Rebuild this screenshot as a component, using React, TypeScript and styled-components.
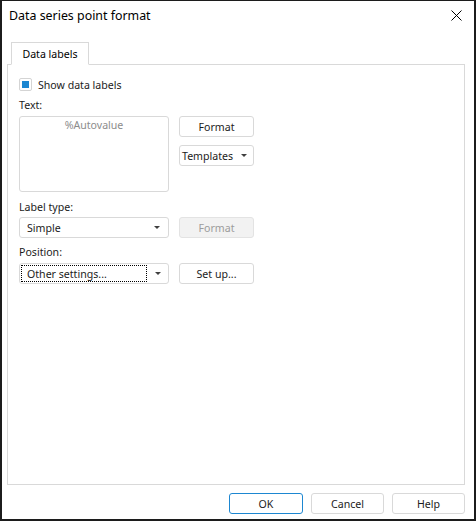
import React from "react";
import styled, { createGlobalStyle } from "styled-components";

const GlobalStyle = createGlobalStyle`
  html, body {
    margin: 0;
    padding: 0;
    background: #ffffff;
  }
  body {
    font-family: "Noto Sans", "Open Sans", "DejaVu Sans", sans-serif;
    font-size: 10.6px;
    color: #1b1b1b;
  }
  * {
    box-sizing: border-box;
  }
`;

const Dialog = styled.div`
  width: 476px;
  height: 521px;
  background: #ffffff;
  border: 2px solid #1c1c1c;
  border-top-width: 1px;
  display: flex;
  flex-direction: column;
`;

const TitleBar = styled.div`
  height: 29px;
  display: flex;
  align-items: center;
  justify-content: space-between;
  padding: 0 12px 0 7px;
`;

const Title = styled.div`
  font-size: 12.4px;
  color: #000000;
`;

const CloseButton = styled.div`
  width: 12px;
  height: 12px;
  display: flex;
  align-items: center;
  justify-content: center;
`;

const Body = styled.div`
  flex: 1;
  display: flex;
  flex-direction: column;
  padding: 12px 9px 5px 5px;
`;

const TabStrip = styled.div`
  display: flex;
  padding-left: 4px;
  margin-bottom: -1px;
  position: relative;
  z-index: 1;
`;

const Tab = styled.div`
  width: 78px;
  height: 23px;
  border: 1px solid #d9d9d9;
  border-bottom: 1px solid #ffffff;
  background: #ffffff;
  display: flex;
  align-items: center;
  justify-content: center;
  color: #000000;
`;

const Panel = styled.div`
  flex: 1;
  border: 1px solid #d9d9d9;
  padding: 13px 11px;
  display: flex;
  flex-direction: column;
`;

const CheckRow = styled.div`
  display: flex;
  align-items: center;
  gap: 6px;
  height: 13px;
`;

const CheckBox = styled.div`
  width: 13px;
  height: 13px;
  border: 1px solid #d4d4d4;
  border-radius: 2px;
  display: flex;
  align-items: center;
  justify-content: center;
`;

const CheckMark = styled.div`
  width: 7px;
  height: 7px;
  background: #1d87d1;
`;

const Label = styled.div<{ $top: number }>`
  margin-top: ${(p) => p.$top}px;
  height: 14px;
  line-height: 14px;
`;

const Row = styled.div<{ $top: number }>`
  margin-top: ${(p) => p.$top}px;
  display: flex;
  gap: 10px;
  align-items: flex-start;
`;

const TextArea = styled.div`
  width: 150px;
  height: 76px;
  border: 1px solid #d9d9d9;
  border-radius: 3px;
  text-align: center;
  color: #8c8c8c;
  padding-top: 1px;
  line-height: 14px;
`;

const Column = styled.div`
  display: flex;
  flex-direction: column;
  gap: 8px;
`;

const Button = styled.div<{ $width?: number; $disabled?: boolean; $primary?: boolean }>`
  width: ${(p) => p.$width ?? 75}px;
  height: 21px;
  border: 1px solid ${(p) => (p.$primary ? "#1d87d1" : p.$disabled ? "#e3e3e3" : "#d9d9d9")};
  border-radius: 3px;
  background: ${(p) => (p.$disabled ? "#f2f2f2" : "#ffffff")};
  color: ${(p) => (p.$disabled ? "#9c9c9c" : "#1b1b1b")};
  display: flex;
  align-items: center;
  justify-content: center;
`;

const Select = styled.div<{ $width: number; $pad: number }>`
  width: ${(p) => p.$width}px;
  height: 21px;
  border: 1px solid #d9d9d9;
  border-radius: 3px;
  display: flex;
  align-items: center;
  padding: 0 0 0 ${(p) => p.$pad}px;
`;

const SelectText = styled.div`
  flex: 1;
  white-space: nowrap;
`;

const FocusBox = styled.div`
  flex: 0 0 126px;
  height: 17px;
  border: 1px dotted #000000;
  display: flex;
  align-items: center;
  padding-left: 5px;
  white-space: nowrap;
`;

const Arrow = styled.div`
  width: 0;
  height: 0;
  border-left: 3px solid transparent;
  border-right: 3px solid transparent;
  border-top: 3px solid #404040;
  margin: 0 8px;
`;

const Footer = styled.div`
  display: flex;
  justify-content: flex-end;
  gap: 8px;
  margin-top: 8px;
`;

const CloseIcon = () => (
  <svg width="11" height="11" viewBox="0 0 11 11">
    <path d="M0.5 0.5 L10.5 10.5 M10.5 0.5 L0.5 10.5" stroke="#000" strokeWidth="1" fill="none" />
  </svg>
);

export default function App() {
  return (
    <>
      <GlobalStyle />
      <Dialog>
        <TitleBar>
          <Title>Data series point format</Title>
          <CloseButton>
            <CloseIcon />
          </CloseButton>
        </TitleBar>
        <Body>
          <TabStrip>
            <Tab>Data labels</Tab>
          </TabStrip>
          <Panel>
            <CheckRow>
              <CheckBox>
                <CheckMark />
              </CheckBox>
              <span>Show data labels</span>
            </CheckRow>
            <Label $top={7}>Text:</Label>
            <Row $top={4}>
              <TextArea>%Autovalue</TextArea>
              <Column>
                <Button>Format</Button>
                <Select $width={75} $pad={2}>
                  <SelectText>Templates</SelectText>
                  <Arrow />
                </Select>
              </Column>
            </Row>
            <Label $top={8}>Label type:</Label>
            <Row $top={3}>
              <Select $width={150} $pad={7}>
                <SelectText>Simple</SelectText>
                <Arrow />
              </Select>
              <Button $disabled>Format</Button>
            </Row>
            <Label $top={7}>Position:</Label>
            <Row $top={4}>
              <Select $width={150} $pad={1}>
                <FocusBox>Other settings...</FocusBox>
                <SelectText />
                <Arrow />
              </Select>
              <Button>Set up...</Button>
            </Row>
          </Panel>
          <Footer>
            <Button $width={74} $primary>OK</Button>
            <Button $width={73}>Cancel</Button>
            <Button $width={73}>Help</Button>
          </Footer>
        </Body>
      </Dialog>
    </>
  );
}
